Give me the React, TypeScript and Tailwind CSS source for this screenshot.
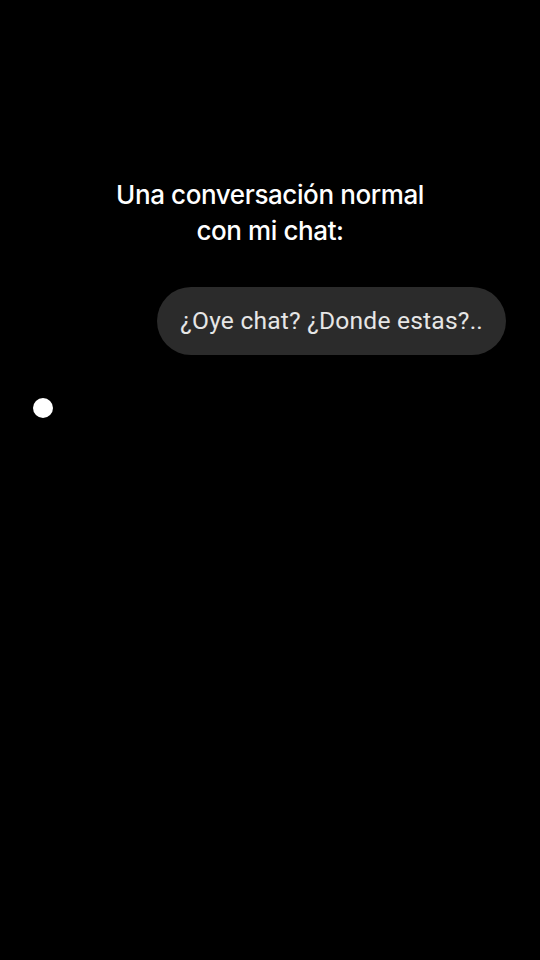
export default function App() {
  return (
    <div className="w-[540px] h-[960px] bg-black flex flex-col overflow-hidden">
      <h1 className="pt-[177px] text-center text-white text-[26px] leading-[36px] font-medium font-['Inter',sans-serif] tracking-[-0.4px]">
        Una conversación normal
        <br />
        con mi chat:
      </h1>

      <div className="mt-[38px] self-end mr-[34px] h-[68px] px-[23px] flex items-center rounded-full bg-[#2b2b2b]">
        <span className="text-[24.6px] text-[#e6e6e6] font-['Roboto',sans-serif] tracking-[0.2px]">
          ¿Oye chat? ¿Donde estas?..
        </span>
      </div>

      <div className="mt-[43px] ml-[33px] w-5 h-5 rounded-full bg-white" />
    </div>
  );
}
